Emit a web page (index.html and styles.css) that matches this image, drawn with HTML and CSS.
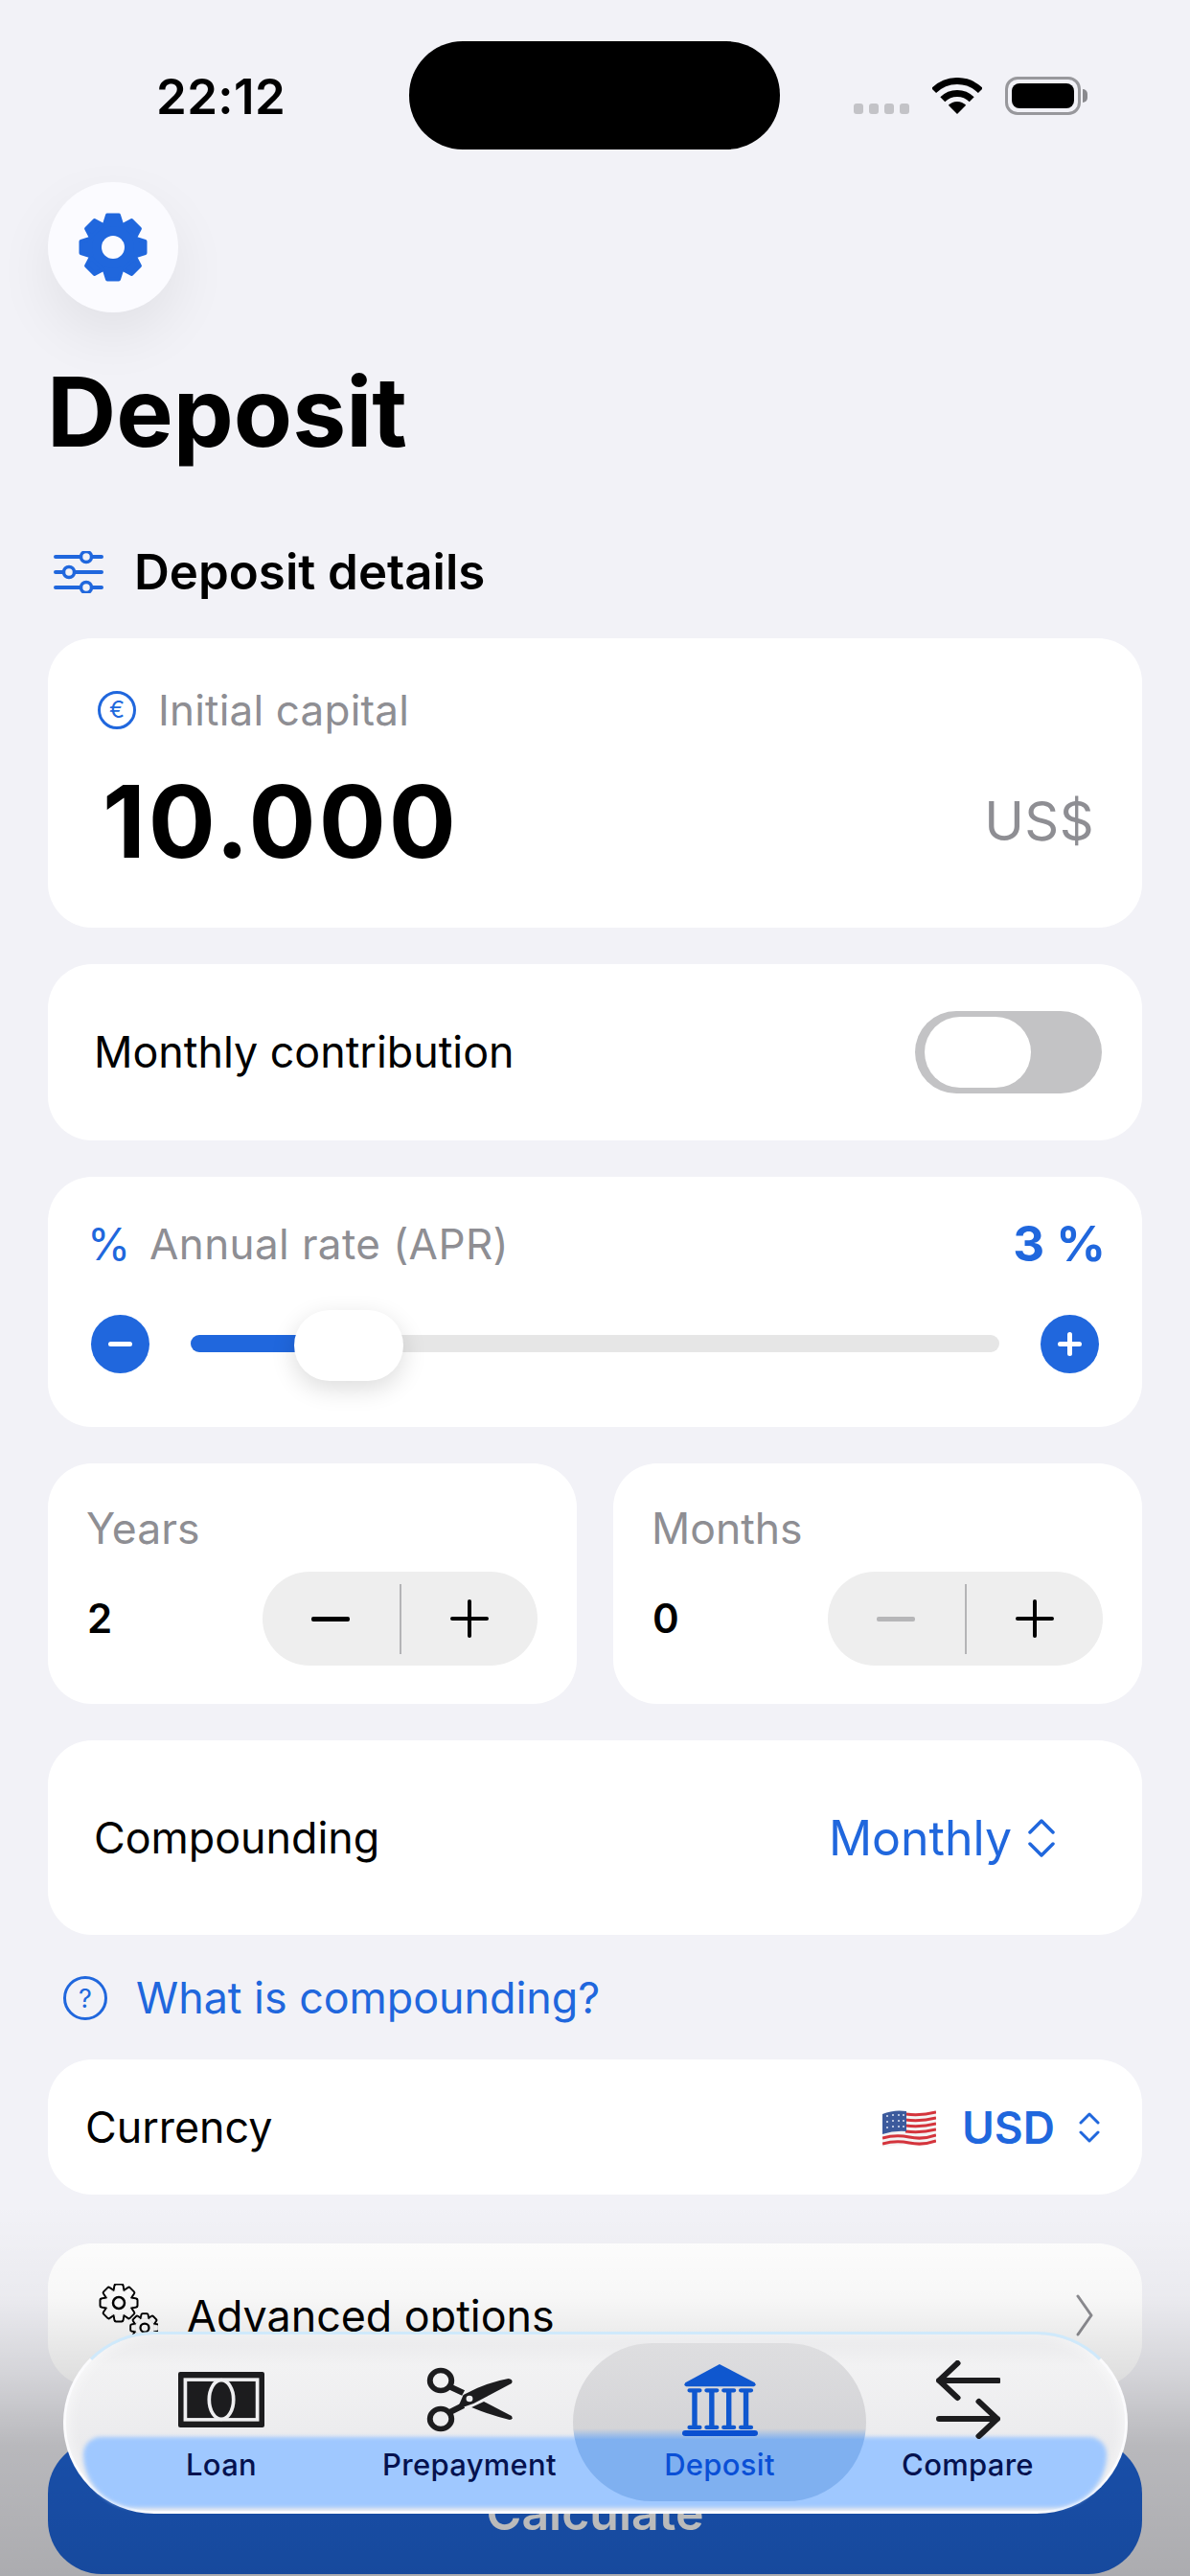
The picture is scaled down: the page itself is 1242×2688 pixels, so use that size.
FILE: index.html
```html
<!DOCTYPE html>
<html lang="en">
<head>
<meta charset="utf-8">
<title>Deposit</title>
<link rel="stylesheet" href="styles.css">
</head>
<body>
<div class="screen">
  <header class="status">
    <span class="time">22:12</span>
    <div class="island"></div>
    <div class="signal"><i></i><i></i><i></i><i></i></div>
    <svg class="wifi" viewBox="0 0 52 38"><path d="M1.6 13.6A34.5 34.5 0 0 1 50.4 13.6M10.8 22.8A21.5 21.5 0 0 1 41.2 22.8" fill="none" stroke="#000" stroke-width="7"/><path d="M26 38L16.8 28.8A13 13 0 0 1 35.2 28.8Z"/></svg>
    <div class="battery"><div class="battery-fill"></div></div>
    <div class="battery-nub"></div>
  </header>

  <main class="content">
    <button class="gear-btn">
      <svg class="gear" viewBox="-36 -36 72 72">
        <g fill="#2067dd" stroke="#2067dd" stroke-width="4" stroke-linejoin="round">
          <circle r="24"/>
          <path d="M-9 -24L-6 -33.500H6L9 -24Z"/>
          <path d="M-9 -24L-6 -33.500H6L9 -24Z" transform="rotate(45)"/>
          <path d="M-9 -24L-6 -33.500H6L9 -24Z" transform="rotate(90)"/>
          <path d="M-9 -24L-6 -33.500H6L9 -24Z" transform="rotate(135)"/>
          <path d="M-9 -24L-6 -33.500H6L9 -24Z" transform="rotate(180)"/>
          <path d="M-9 -24L-6 -33.500H6L9 -24Z" transform="rotate(225)"/>
          <path d="M-9 -24L-6 -33.500H6L9 -24Z" transform="rotate(270)"/>
          <path d="M-9 -24L-6 -33.500H6L9 -24Z" transform="rotate(315)"/>
        </g>
        <circle r="12" fill="#fbfbff"/>
      </svg>
    </button>
    <h1 class="title">Deposit</h1>

    <div class="section-head">
      <svg class="sliders" viewBox="0 0 52 44" fill="none" stroke="#2067dd" stroke-width="4" stroke-linecap="round">
        <path d="M2 6H28M40 6H50M2 22H10M22 22H50M2 38H28M40 38H50"/>
        <circle cx="34" cy="6" r="5.500" stroke-width="3.500"/>
        <circle cx="16" cy="22" r="5.500" stroke-width="3.500"/>
        <circle cx="34" cy="38" r="5.500" stroke-width="3.500"/>
      </svg>
      <h2 class="section-title">Deposit details</h2>
    </div>

    <section class="card capital-card">
      <div class="capital-label"><span class="euro">€</span><span class="muted">Initial capital</span></div>
      <div class="capital-value"><span class="amount">10.000</span><span class="unit">US$</span></div>
    </section>

    <section class="card row-card contribution-card">
      <span class="text">Monthly contribution</span>
      <div class="toggle"><div class="toggle-knob"></div></div>
    </section>

    <section class="card rate-card">
      <div class="rate-head">
        <span class="percent">%</span><span class="muted rate-label">Annual rate (APR)</span>
        <span class="rate-value">3 %</span>
      </div>
      <div class="slider">
        <span class="round-btn minus"></span>
        <div class="track"><div class="track-fill"></div><div class="thumb"></div></div>
        <span class="round-btn plus"></span>
      </div>
    </section>

    <div class="pair">
      <section class="card period-card">
        <div class="muted period-label">Years</div>
        <div class="period-row">
          <span class="period-value">2</span>
          <div class="stepper"><span class="step"><i class="sign-minus"></i></span><span class="step-div"></span><span class="step"><i class="sign-plus"></i></span></div>
        </div>
      </section>
      <section class="card period-card">
        <div class="muted period-label">Months</div>
        <div class="period-row">
          <span class="period-value">0</span>
          <div class="stepper"><span class="step"><i class="sign-minus off"></i></span><span class="step-div"></span><span class="step"><i class="sign-plus"></i></span></div>
        </div>
      </section>
    </div>

    <section class="card row-card compounding-card">
      <span class="text">Compounding</span>
      <div class="picker">
        <span class="picker-text">Monthly</span>
        <svg class="chev-lg" viewBox="0 0 30 40" fill="none" stroke="#2067dd" stroke-width="3.500" stroke-linecap="round" stroke-linejoin="round"><path d="M3 14L15 2L27 14M3 26L15 38L27 26"/></svg>
      </div>
    </section>

    <div class="help-link"><span class="help-icon">?</span><span class="help-text">What is compounding?</span></div>

    <section class="card row-card currency-card">
      <span class="text">Currency</span>
      <div class="picker">
        <svg class="flag" viewBox="0 0 56 40">
          <path d="M0 6Q14 0 28 4T56 2V36Q42 38 28 38T0 40Z" fill="#f4f4f4"/>
          <g fill="none" stroke="#d4343c" stroke-width="3">
            <path d="M24 6Q40 8 56 4M24 12Q40 14 56 10M24 18Q40 20 56 16M24 24Q40 26 56 22M0 31Q14 27 28 30T56 28M0 37Q14 33 28 36T56 34"/>
          </g>
          <path d="M0 6Q12 1 25 3V24Q12 23 0 27Z" fill="#3c5a9c"/>
          <g fill="#dfe6f4"><circle cx="5" cy="8" r="1"/><circle cx="11" cy="7" r="1"/><circle cx="17" cy="7" r="1"/><circle cx="22" cy="7" r="1"/><circle cx="5" cy="14" r="1"/><circle cx="11" cy="13" r="1"/><circle cx="17" cy="13" r="1"/><circle cx="22" cy="13" r="1"/><circle cx="5" cy="20" r="1"/><circle cx="11" cy="19" r="1"/><circle cx="17" cy="19" r="1"/><circle cx="22" cy="19" r="1"/></g>
        </svg>
        <span class="currency-code">USD</span>
        <svg class="chev-sm" viewBox="0 0 22 32" fill="none" stroke="#2067dd" stroke-width="3" stroke-linecap="round" stroke-linejoin="round"><path d="M2 11L11 2L20 11M2 21L11 30L20 21"/></svg>
      </div>
    </section>

    <section class="card row-card advanced-card">
      <div class="adv-left">
        <svg class="gears" viewBox="0 0 62 62">
          <g transform="translate(21 20)">
            <g fill="#000" stroke="#000" stroke-width="5" stroke-linejoin="round">
              <circle r="13"/><path d="M-4 -13L-3 -18H3L4 -13Z"/><path d="M-4 -13L-3 -18H3L4 -13Z" transform="rotate(45)"/><path d="M-4 -13L-3 -18H3L4 -13Z" transform="rotate(90)"/><path d="M-4 -13L-3 -18H3L4 -13Z" transform="rotate(135)"/><path d="M-4 -13L-3 -18H3L4 -13Z" transform="rotate(180)"/><path d="M-4 -13L-3 -18H3L4 -13Z" transform="rotate(225)"/><path d="M-4 -13L-3 -18H3L4 -13Z" transform="rotate(270)"/><path d="M-4 -13L-3 -18H3L4 -13Z" transform="rotate(315)"/>
            </g>
            <g fill="#fff" stroke="#fff" stroke-width="1" stroke-linejoin="round">
              <circle r="13"/><path d="M-4 -13L-3 -18H3L4 -13Z"/><path d="M-4 -13L-3 -18H3L4 -13Z" transform="rotate(45)"/><path d="M-4 -13L-3 -18H3L4 -13Z" transform="rotate(90)"/><path d="M-4 -13L-3 -18H3L4 -13Z" transform="rotate(135)"/><path d="M-4 -13L-3 -18H3L4 -13Z" transform="rotate(180)"/><path d="M-4 -13L-3 -18H3L4 -13Z" transform="rotate(225)"/><path d="M-4 -13L-3 -18H3L4 -13Z" transform="rotate(270)"/><path d="M-4 -13L-3 -18H3L4 -13Z" transform="rotate(315)"/>
            </g>
            <circle r="6" fill="none" stroke="#000" stroke-width="2.500"/>
          </g>
          <g transform="translate(48 46) scale(.75)">
            <g fill="#000" stroke="#000" stroke-width="6" stroke-linejoin="round">
              <circle r="13"/><path d="M-4 -13L-3 -18H3L4 -13Z"/><path d="M-4 -13L-3 -18H3L4 -13Z" transform="rotate(45)"/><path d="M-4 -13L-3 -18H3L4 -13Z" transform="rotate(90)"/><path d="M-4 -13L-3 -18H3L4 -13Z" transform="rotate(135)"/><path d="M-4 -13L-3 -18H3L4 -13Z" transform="rotate(180)"/><path d="M-4 -13L-3 -18H3L4 -13Z" transform="rotate(225)"/><path d="M-4 -13L-3 -18H3L4 -13Z" transform="rotate(270)"/><path d="M-4 -13L-3 -18H3L4 -13Z" transform="rotate(315)"/>
            </g>
            <g fill="#fff" stroke="#fff" stroke-width="1" stroke-linejoin="round">
              <circle r="13"/><path d="M-4 -13L-3 -18H3L4 -13Z"/><path d="M-4 -13L-3 -18H3L4 -13Z" transform="rotate(45)"/><path d="M-4 -13L-3 -18H3L4 -13Z" transform="rotate(90)"/><path d="M-4 -13L-3 -18H3L4 -13Z" transform="rotate(135)"/><path d="M-4 -13L-3 -18H3L4 -13Z" transform="rotate(180)"/><path d="M-4 -13L-3 -18H3L4 -13Z" transform="rotate(225)"/><path d="M-4 -13L-3 -18H3L4 -13Z" transform="rotate(270)"/><path d="M-4 -13L-3 -18H3L4 -13Z" transform="rotate(315)"/>
            </g>
            <circle r="6" fill="none" stroke="#000" stroke-width="3"/>
          </g>
        </svg>
        <span class="text">Advanced options</span>
      </div>
      <svg class="chev-right" viewBox="0 0 18 44" fill="none" stroke="#8e8e93" stroke-width="3" stroke-linecap="round" stroke-linejoin="round"><path d="M2 2L16 22L2 42"/></svg>
    </section>

    <button class="calc-btn">Calculate</button>
  </main>

  <div class="fade"></div>

  <nav class="tabbar">
    <div class="tab-tint"></div>
    <a class="tab">
      <svg class="ic-loan" viewBox="0 0 85 57" preserveAspectRatio="none"><rect width="85" height="57" rx="2" fill="#1c1c1e"/><rect x="7" y="8" width="71" height="41" fill="none" stroke="#efeff1" stroke-width="3.500"/><ellipse cx="42.500" cy="28.500" rx="12" ry="20" fill="none" stroke="#efeff1" stroke-width="3.500"/></svg>
      <span class="tab-label">Loan</span>
    </a>
    <a class="tab">
      <svg class="ic-scissors" viewBox="0 0 84 68" preserveAspectRatio="none"><g fill="none" stroke="#1c1c1e" stroke-width="5.500"><circle cx="14" cy="14" r="10.500"/><circle cx="14" cy="54" r="10.500"/></g><path d="M22 20L36 27M23 47L36 40" stroke="#1c1c1e" stroke-width="6"/><path d="M30 44L36 29Q58 16 80 12Q85 13 83 17L46 38Z" fill="#1c1c1e"/><path d="M44 42L56 36L83 51Q85 55 81 55Q62 50 44 42Z" fill="#1c1c1e"/><circle cx="42" cy="33" r="3.200" fill="#efeff1"/></svg>
      <span class="tab-label">Prepayment</span>
    </a>
    <a class="tab tab-active">
      <svg class="ic-bank" viewBox="0 0 73 75" preserveAspectRatio="none"><path d="M36 1L70 20Q72 23 69 24H4Q1 23 3 20Z" fill="#0f57cf"/><g stroke="#0f57cf" stroke-width="5" fill="none"><path d="M12 29V65M28.500 29V65M45 29V65M61.500 29V65"/></g><g stroke="#0f57cf" stroke-width="4" stroke-linecap="round"><path d="M7 28H17M23.500 28H33.500M40 28H50M56.500 28H66.500M7 66H17M23.500 66H33.500M40 66H50M56.500 66H66.500"/></g><rect y="69" width="73" height="6" rx="3" fill="#0a4fd0"/></svg>
      <span class="tab-label">Deposit</span>
    </a>
    <a class="tab">
      <svg class="ic-compare" viewBox="0 0 63 82" preserveAspectRatio="none" fill="none" stroke="#1c1c1e" stroke-width="6" stroke-linecap="round" stroke-linejoin="round"><path d="M61 21H3M21 3L3 21L21 39M3 61H60M42 43L60 61L42 79"/></svg>
      <span class="tab-label">Compare</span>
    </a>
  </nav>
</div>
</body>
</html>
```

FILE: styles.css
```css
* { box-sizing: border-box; }
html, body { margin: 0; padding: 0; }
body { width: 1242px; height: 2688px; overflow: hidden; background: #f2f2f7; font-family: Inter, "Liberation Sans", sans-serif; color: #000; }
.screen { position: relative; width: 1242px; height: 2688px; overflow: hidden; background: #f2f2f7; }

/* status bar */
.status { display: flex; align-items: flex-start; height: 156px; padding: 43px 0 0 163px; }
.time { width: 132px; margin-top: 29px; font-size: 51px; line-height: 58px; font-weight: 600; letter-spacing: .4px; white-space: nowrap; }
.island { width: 387px; height: 113px; margin-left: 132px; background: #000; border-radius: 56px; }
.signal { display: flex; gap: 6px; margin: 65px 0 0 77px; }
.signal i { width: 10px; height: 11px; border-radius: 3px; background: #c3c3c7; }
.wifi { width: 52px; height: 38px; margin: 38px 0 0 24px; }
.battery { width: 79px; height: 40px; margin: 37px 0 0 24px; padding: 4px; border: 3px solid #98989c; border-radius: 13px; }
.battery-fill { width: 100%; height: 100%; background: #000; border-radius: 8px; }
.battery-nub { width: 5px; height: 14px; margin: 50px 0 0 2px; background: #8a8a8e; border-radius: 0 5px 5px 0; }

.content { padding: 0 50px; }

.gear-btn { display: flex; align-items: center; justify-content: center; width: 136px; height: 136px; margin: 34px 0 0 0; padding: 0; border: 0; border-radius: 50%; background: #fbfbff; box-shadow: 0 24px 60px rgba(0, 0, 0, .07); }
.gear { width: 72px; height: 72px; }

.title { margin: 44px 0 0 -1px; font-size: 100px; line-height: 120px; font-weight: 700; letter-spacing: 0; }

.section-head { display: flex; align-items: center; height: 60px; margin-top: 77px; padding-left: 6px; }
.sliders { width: 52px; height: 44px; }
.section-title { margin: 0 0 0 32px; font-size: 51px; line-height: 60px; font-weight: 600; letter-spacing: 0; }

.card { background: #fff; border-radius: 46px; }
.muted { color: #8e8e93; font-size: 44px; line-height: 60px; letter-spacing: .2px; }
.text { font-size: 44.8px; line-height: 60px; }

.capital-card { height: 302px; margin-top: 39px; padding: 45px 50px 0 52px; }
.capital-label { display: flex; align-items: center; height: 60px; }
.euro { display: flex; align-items: center; justify-content: center; width: 40px; height: 40px; margin-right: 23px; border: 3px solid #2067dd; border-radius: 50%; color: #2067dd; font-size: 24px; line-height: 1; }
.capital-value { display: flex; align-items: center; justify-content: space-between; height: 100px; margin-top: 36px; }
.amount { margin-left: 5px; font-size: 104px; line-height: 100px; font-weight: 700; letter-spacing: 3px; }
.unit { color: #8e8e93; font-size: 56px; line-height: 60px; letter-spacing: .4px; }

.row-card { display: flex; align-items: center; justify-content: space-between; }
.contribution-card { height: 184px; margin-top: 38px; padding: 0 42px 0 48px; }
.toggle { width: 195px; height: 86px; padding: 6px 0 0 10px; background: #c3c3c5; border-radius: 43px; }
.toggle-knob { width: 111px; height: 74px; background: #fff; border-radius: 37px; }

.rate-card { height: 261px; margin-top: 38px; padding: 40px 45px 0 45px; }
.rate-head { display: flex; align-items: center; height: 60px; }
.percent { width: 65px; margin-left: -4px; color: #2067dd; font-size: 46px; line-height: 60px; }
.rate-label { letter-spacing: .4px; }
.rate-value { margin: 0 -7px 0 auto; color: #2067dd; font-size: 51px; line-height: 60px; font-weight: 700; }
.slider { display: flex; align-items: center; gap: 43px; height: 74px; margin-top: 37px; }
.round-btn { position: relative; flex: none; width: 61px; height: 61px; border-radius: 50%; background: #2067dd; }
.round-btn::before { content: ""; position: absolute; left: 18px; top: 28px; width: 25px; height: 5px; border-radius: 3px; background: #fff; }
.plus::after { content: ""; position: absolute; left: 28px; top: 18px; width: 5px; height: 25px; border-radius: 3px; background: #fff; }
.track { position: relative; flex: 1; height: 18px; background: #e6e6e6; border-radius: 9px; }
.track-fill { width: 115px; height: 18px; background: #2067dd; border-radius: 9px 0 0 9px; }
.thumb { position: absolute; left: 108px; top: -26px; width: 114px; height: 74px; background: #fff; border-radius: 37px; box-shadow: 0 8px 26px rgba(0, 0, 0, .14); }

.pair { display: grid; grid-template-columns: 552px 552px; column-gap: 38px; margin-top: 38px; }
.period-card { height: 251px; padding: 38px 41px 0 41px; }
.period-label { height: 60px; margin-left: -1px; font-size: 44.5px; letter-spacing: 0; }
.period-row { display: flex; align-items: center; justify-content: space-between; height: 98px; margin-top: 15px; }
.period-value { font-size: 42px; line-height: 60px; font-weight: 600; }
.stepper { display: flex; align-items: center; width: 287px; height: 98px; background: #eeeeee; border-radius: 49px; }
.step { display: flex; align-items: center; justify-content: center; flex: 1; height: 100%; }
.step-div { width: 2px; height: 73px; background: #b4b4b6; }
.sign-minus { width: 40px; height: 5px; background: #000; border-radius: 2px; }
.sign-minus.off { background: #b6b6b8; }
.sign-plus { position: relative; width: 40px; height: 40px; }
.sign-plus::before { content: ""; position: absolute; left: 0; top: 18px; width: 40px; height: 4px; background: #000; border-radius: 2px; }
.sign-plus::after { content: ""; position: absolute; left: 18px; top: 0; width: 4px; height: 40px; background: #000; border-radius: 2px; }

.compounding-card { height: 203px; margin-top: 38px; padding: 0 90px 0 48px; }
.picker { display: flex; align-items: center; }
.picker-text { color: #2067dd; font-size: 50px; line-height: 60px; }
.chev-lg { width: 30px; height: 40px; margin-left: 16px; }

.help-link { display: flex; align-items: center; height: 60px; margin: 36px 0 34px 0; padding-left: 16px; }
.help-icon { display: flex; align-items: center; justify-content: center; width: 46px; height: 46px; margin-right: 30px; border: 3.5px solid #2067dd; border-radius: 50%; color: #2067dd; font-size: 27px; line-height: 1; }
.help-text { color: #2067dd; font-size: 44.8px; line-height: 60px; }

.currency-card { height: 141px; padding: 0 44px 0 39px; }
.flag { width: 56px; height: 40px; }
.currency-code { margin-left: 27px; color: #2067dd; font-size: 46px; line-height: 60px; font-weight: 600; }
.chev-sm { width: 22px; height: 32px; margin-left: 25px; }

.advanced-card { height: 149px; margin-top: 51px; padding: 0 51px 0 53px; }
.adv-left { display: flex; align-items: center; }
.adv-left .text { position: relative; top: 1px; }
.gears { width: 62px; height: 62px; margin: -4px 30px 0 0; }
.chev-right { width: 18px; height: 44px; }

.calc-btn { display: block; width: 100%; height: 140px; margin-top: 56px; padding: 12px 0 0 0; border: 0; border-radius: 56px; background: #2067dd; color: #fff; font: 600 50px/60px Inter, "Liberation Sans", sans-serif; }

/* bottom fade */
.fade { position: absolute; left: 0; right: 0; top: 2300px; height: 388px; background: linear-gradient(to bottom, rgba(0,0,0,0) 0, rgba(0,0,0,.03) 25%, rgba(0,0,0,.12) 45%, rgba(0,0,0,.24) 65%, rgba(0,0,0,.29) 100%); }

/* floating tab bar */
.tabbar { position: absolute; left: 66px; top: 2433px; display: grid; grid-template-columns: 302px 216px 306px 212px; width: 1111px; height: 190px; padding: 9px 0 0 11px; border: 3px solid #fbfbfd; border-top-color: #cfe9fb; border-radius: 95px; background: linear-gradient(to bottom, #e9e9eb 0, #f2f2f3 18%, #ececee 55%, #e6e6e8 100%); box-shadow: inset 0 0 16px rgba(255, 255, 255, .7); }
.tab-tint { position: absolute; left: 18px; right: 19px; top: 107px; bottom: 3px; background: #9fc8ff; border-radius: 24px 24px 74px 74px; filter: blur(2px); }
.tab { position: relative; display: flex; flex-direction: column; align-items: center; height: 165px; padding-top: 17px; color: #05124f; text-decoration: none; }
.tab svg { display: block; height: 84px; }
.tab-label { margin-top: 6px; font-size: 31px; line-height: 40px; font-weight: 500; letter-spacing: .3px; white-space: nowrap; }
.tab-active { border-radius: 83px; color: #0a4fd6; background: linear-gradient(to bottom, #dedee0 0, #d4d4d7 54%, #7fb0f0 61%, #7fb0f0 100%); }
.ic-loan { width: 90px; padding: 13px 0; }
.ic-scissors { width: 90px; padding: 8px 0; }
.ic-bank { width: 79px; padding: 4px 0; }
.ic-compare { width: 67px; padding: 1px 0; }
```
